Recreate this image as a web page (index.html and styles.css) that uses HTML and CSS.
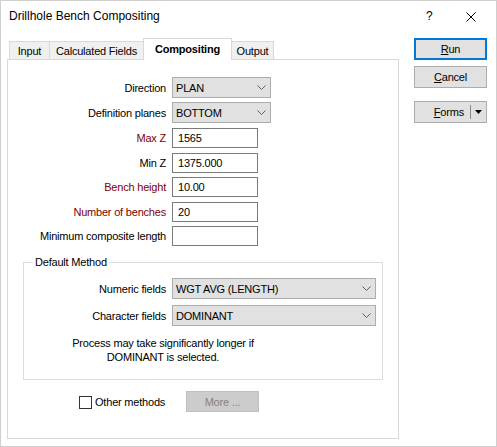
FILE: index.html
```html
<!DOCTYPE html>
<html>
<head>
<meta charset="utf-8">
<title>Drillhole Bench Compositing</title>
<link rel="stylesheet" href="styles.css">
</head>
<body>
<div class="window">
  <div class="titlebar">
    <span class="title">Drillhole Bench Compositing</span>
    <span class="help">?</span>
    <span class="close"><svg width="10" height="10" viewBox="0 0 10 10"><path d="M0.5 0.5 L9.5 9.5 M9.5 0.5 L0.5 9.5" stroke="#000" stroke-width="1" fill="none"/></svg></span>
  </div>
  <div class="main">
    <div class="tabs-area">
      <div class="tabs">
        <div class="tab tab-input">Input</div>
        <div class="tab tab-calc">Calculated Fields</div>
        <div class="tab tab-active">Compositing</div>
        <div class="tab tab-output">Output</div>
      </div>
      <div class="panel">
        <div class="fields">
          <div class="row">
            <span class="label">Direction</span>
            <div class="combo combo-short"><span>PLAN</span><svg class="chev" width="9" height="5" viewBox="0 0 9 5"><polyline points="0.5,0.5 4.5,4.5 8.5,0.5" fill="none" stroke="#606060" stroke-width="1"/></svg></div>
          </div>
          <div class="row">
            <span class="label">Definition planes</span>
            <div class="combo combo-short"><span>BOTTOM</span><svg class="chev" width="9" height="5" viewBox="0 0 9 5"><polyline points="0.5,0.5 4.5,4.5 8.5,0.5" fill="none" stroke="#606060" stroke-width="1"/></svg></div>
          </div>
          <div class="inputs">
            <div class="row">
              <span class="label req">Max Z</span>
              <div class="edit">1565</div>
            </div>
            <div class="row">
              <span class="label">Min Z</span>
              <div class="edit">1375.000</div>
            </div>
            <div class="row">
              <span class="label req">Bench height</span>
              <div class="edit">10.00</div>
            </div>
            <div class="row">
              <span class="label req">Number of benches</span>
              <div class="edit">20</div>
            </div>
            <div class="row">
              <span class="label">Minimum composite length</span>
              <div class="edit"></div>
            </div>
          </div>
        </div>
        <fieldset class="group">
          <legend>Default Method</legend>
          <div class="group-rows">
            <div class="row">
              <span class="label label-group">Numeric fields</span>
              <div class="combo combo-long"><span>WGT AVG (LENGTH)</span><svg class="chev" width="9" height="5" viewBox="0 0 9 5"><polyline points="0.5,0.5 4.5,4.5 8.5,0.5" fill="none" stroke="#606060" stroke-width="1"/></svg></div>
            </div>
            <div class="row">
              <span class="label label-group">Character fields</span>
              <div class="combo combo-long"><span>DOMINANT</span><svg class="chev" width="9" height="5" viewBox="0 0 9 5"><polyline points="0.5,0.5 4.5,4.5 8.5,0.5" fill="none" stroke="#606060" stroke-width="1"/></svg></div>
            </div>
          </div>
          <div class="note">Process may take significantly longer if<br>DOMINANT is selected.</div>
        </fieldset>
        <div class="bottom-row">
          <div class="check-wrap">
            <span class="checkbox"></span>
            <span class="check-label">Other methods</span>
          </div>
          <div class="btn-disabled">More ...</div>
        </div>
      </div>
    </div>
    <div class="buttons">
      <div class="btn btn-default"><span><u>R</u>un</span></div>
      <div class="btn"><span><u>C</u>ancel</span></div>
      <div class="btn btn-split">
        <span class="split-text"><u>F</u>orms</span>
        <span class="split-sep"></span>
        <span class="split-arrow"><svg width="7" height="4" viewBox="0 0 7 4"><polygon points="0,0 7,0 3.5,4" fill="#000"/></svg></span>
      </div>
    </div>
  </div>
</div>
</body>
</html>
```
FILE: styles.css
```css
html, body {
  margin: 0;
  padding: 0;
  background: #ffffff;
}
body {
  font-family: "Liberation Sans", Arial, sans-serif;
  font-size: 11px;
  letter-spacing: -0.2px;
  color: #000;
}
.window {
  width: 497px;
  height: 447px;
  box-sizing: border-box;
  border: 1px solid #cfcfcf;
  background: #fff;
}
.titlebar {
  height: 30px;
  display: flex;
  align-items: center;
  padding-left: 8px;
}
.title {
  font-size: 12px;
  letter-spacing: 0;
  flex: 1;
}
.help {
  font-size: 12px;
  letter-spacing: 0;
  width: 12px;
  margin-right: 28px;
}
.close {
  display: flex;
  width: 10px;
  height: 10px;
  margin-right: 20px;
  margin-top: 1px;
}
.main {
  display: flex;
  padding-left: 6px;
  padding-top: 7px;
}
.tabs-area {
  width: 392px;
}
.tabs {
  display: flex;
  align-items: flex-end;
  height: 21px;
  padding-left: 2px;
}
.tab {
  box-sizing: border-box;
  height: 18px;
  border: 1px solid #d9d9d9;
  border-bottom: none;
  background: #f0f0f0;
  display: flex;
  align-items: center;
  justify-content: center;
  margin-left: -1px;
  white-space: nowrap;
}
.tab-input { width: 41px; margin-left: 0; }
.tab-calc { width: 95px; }
.tab-active {
  width: 89px;
  height: 22px;
  margin-bottom: -1px;
  background: #fff;
  font-weight: bold;
  position: relative;
  z-index: 1;
  padding-bottom: 2px;
}
.tab-output { width: 43px; }
.panel {
  box-sizing: border-box;
  height: 380px;
  border: 1px solid #d9d9d9;
  padding-top: 17px;
}
.fields {
  display: flex;
  flex-direction: column;
  gap: 4px;
}
.inputs {
  display: flex;
  flex-direction: column;
  gap: 4.5px;
  margin-top: 1px;
}
.row {
  display: flex;
  align-items: center;
  gap: 6px;
}
.label {
  width: 158px;
  text-align: right;
  white-space: nowrap;
}
.label-group {
  width: 142px;
}
.req {
  color: #800000;
}
.combo {
  box-sizing: border-box;
  height: 21px;
  background: #e1e1e1;
  border: 1px solid #adadad;
  display: flex;
  align-items: center;
  padding-left: 3px;
  padding-right: 4px;
}
.combo span {
  flex: 1;
}
.combo-short { width: 99px; }
.combo-long { width: 204px; }
.chev {
  display: block;
}
.edit {
  box-sizing: border-box;
  width: 86px;
  height: 20px;
  border: 1px solid #7a7a7a;
  background: #fff;
  padding-left: 5px;
  display: flex;
  align-items: center;
}
.group {
  margin: 9px 15px 0 15px;
  padding: 9px 5px 15px 0;
  border: 1px solid #dcdcdc;
  min-width: 0;
}
.group legend {
  margin-left: 9px;
  padding: 0 2px;
  line-height: 14px;
}
.group-rows {
  display: flex;
  flex-direction: column;
  gap: 6px;
}
.note {
  width: 278px;
  margin-top: 10px;
  text-align: center;
  line-height: 14px;
}
.bottom-row {
  display: flex;
  align-items: center;
  margin-top: 11px;
  padding-left: 71px;
}
.check-wrap {
  width: 107px;
  display: flex;
  align-items: center;
  gap: 3px;
  padding-top: 1px;
}
.checkbox {
  box-sizing: border-box;
  width: 13px;
  height: 13px;
  border: 1px solid #333;
  background: #fff;
}
.btn-disabled {
  box-sizing: border-box;
  width: 73px;
  height: 21px;
  background: #cccccc;
  border: 1px solid #bfbfbf;
  color: #838383;
  display: flex;
  align-items: center;
  justify-content: center;
}
.buttons {
  margin-left: 15px;
  width: 73px;
  display: flex;
  flex-direction: column;
  gap: 6px;
}
.btn {
  box-sizing: border-box;
  width: 73px;
  height: 22px;
  background: #e1e1e1;
  border: 1px solid #adadad;
  display: flex;
  align-items: center;
  justify-content: center;
}
.btn-default {
  border: 2px solid #0078d7;
}
.btn-split {
  margin-top: 7px;
  justify-content: flex-start;
}
.split-text {
  flex: 1;
  text-align: right;
  padding-right: 6px;
}
.split-sep {
  width: 1px;
  height: 14px;
  background: #8a8a8a;
}
.split-arrow {
  width: 15px;
  display: flex;
  justify-content: center;
  align-items: center;
}
.split-arrow svg {
  display: block;
}
```
